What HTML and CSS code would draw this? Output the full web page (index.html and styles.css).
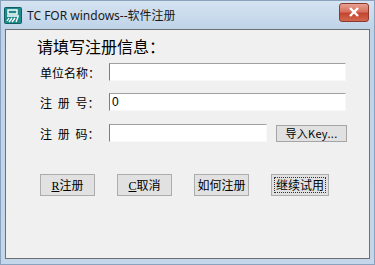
FILE: index.html
```html
<!DOCTYPE html>
<html lang="zh">
<head>
    <meta charset="UTF-8">
    <link rel="stylesheet" href="styles.css">
    <title>TC FOR windows--软件注册</title>
</head>
<body>
    <div class="window">
        <div class="titlebar">
            <svg class="app-icon" width="18" height="17" viewBox="0 0 18 17">
                <rect x="0.5" y="0.5" width="17" height="16" rx="1" fill="#1f8a8c" stroke="#0f5e62"/>
                <path d="M4 3h9v4H4z" fill="none" stroke="#fff" stroke-width="1.4"/>
                <path d="M3 9h12M5 11l-2 3M8 11l-3 4M11 11l-3 4M14 10l-2 5" stroke="#fff" stroke-width="1.3" fill="none"/>
            </svg>
            <span class="title">TC FOR windows--软件注册</span>
            <div class="close-btn">
                <svg width="12" height="10" viewBox="0 0 12 10">
                    <path d="M2 1l8 8M10 1l-8 8" stroke="#fff" stroke-width="2.4"/>
                </svg>
            </div>
        </div>

        <div class="client">
            <div class="heading">请填写注册信息：</div>

            <div class="form-row">
                <label for="unit">单位名称：</label>
                <input type="text" id="unit" class="field wide">
            </div>
            <div class="form-row">
                <label for="regno">注 册 号：</label>
                <input type="text" id="regno" class="field wide" value="0">
            </div>
            <div class="form-row third">
                <label for="regcode">注 册 码：</label>
                <input type="text" id="regcode" class="field short">
                <button type="button" class="key-btn">导入Key...</button>
            </div>

            <div class="actions">
                <button type="button" class="btn"><u>R</u>注册</button>
                <button type="button" class="btn"><u>C</u>取消</button>
                <button type="button" class="btn">如何注册</button>
                <button type="button" class="btn focused"><span class="focus-ring">继续试用</span></button>
            </div>
        </div>
    </div>
</body>
</html>
```

FILE: styles.css
```css
body {
    margin: 0;
    font-family: "Noto Sans CJK SC", "Noto Sans", sans-serif;
    font-size: 12px;
    color: #000;
}

.window {
    width: 375px;
    height: 265px;
    display: flex;
    flex-direction: column;
    background: linear-gradient(to bottom, #d5e3f1 0px, #bfd3e8 28px, #c4d6ea 100%);
    box-sizing: border-box;
    border: 1px solid #8aa2bd;
}

.titlebar {
    height: 28px;
    display: flex;
    align-items: center;
    padding: 0 5px 0 3px;
}

.app-icon {
    flex-shrink: 0;
}

.title {
    margin-left: 5px;
    font-family: "Noto Sans", "Noto Sans CJK SC", sans-serif;
    font-size: 12px;
    color: #1a1a1a;
}

.close-btn {
    margin-left: auto;
    width: 28px;
    height: 17px;
    margin-top: -6px;
    display: flex;
    align-items: center;
    justify-content: center;
    border: 1px solid #8c3a30;
    border-radius: 3px;
    background: linear-gradient(to bottom, #e8a091 0%, #d7725f 45%, #c4452f 55%, #d2684f 100%);
}

.client {
    flex: 1;
    margin: 0 4px 5px 4px;
    border: 1px solid #6f6f6f;
    background: #f0f0f0;
    padding: 6px 0 0 34px;
}

.heading {
    font-size: 16px;
    line-height: 20px;
    margin-left: -3px;
    margin-bottom: 7px;
}

.form-row {
    display: flex;
    align-items: center;
    height: 18px;
    margin-bottom: 12px;
}

.form-row.third {
    margin-top: 13px;
}

.form-row label {
    width: 69px;
    flex-shrink: 0;
    word-spacing: 3px;
}

.field {
    height: 18px;
    box-sizing: border-box;
    margin: 0;
    padding: 0 2px;
    border: 1px solid #f8f8f8;
    border-top-color: #a0a0a0;
    border-left-color: #7e7e7e;
    background: #fff;
    font-family: "Liberation Sans", sans-serif;
    font-size: 12px;
    outline: none;
}

.wide {
    width: 237px;
}

.short {
    width: 158px;
}

.key-btn {
    margin-left: 9px;
    width: 71px;
    height: 17px;
    padding: 0;
    border: 1px solid #a5a5a5;
    background: #e1e1e1;
    font-family: "Noto Sans CJK SC", sans-serif;
    font-size: 11px;
    line-height: 15px;
    letter-spacing: 0.3px;
}

.actions {
    display: flex;
    gap: 22px;
    margin-top: 32px;
}

.btn {
    width: 55px;
    height: 22px;
    padding: 0;
    border: 1px solid #acacac;
    background: #e1e1e1;
    font-family: "Noto Sans CJK SC", sans-serif;
    font-size: 12px;
    line-height: 18px;
    color: #000;
}

.btn u {
    font-family: "Liberation Serif", serif;
}

.btn.focused {
    width: 58px;
    padding: 2px;
}

.focus-ring {
    display: block;
    border: 1px dotted #333;
    line-height: 14px;
}
```
